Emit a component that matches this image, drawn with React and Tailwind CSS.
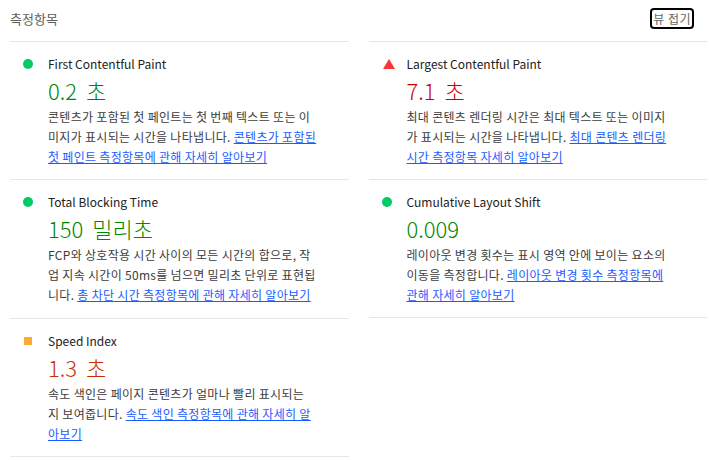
import React from 'react';

const metrics = [
  {
    title: 'First Contentful Paint',
    value: '0.2 초',
    status: 'pass',
    lines: ['콘텐츠가 포함된 첫 페인트는 첫 번째 텍스트 또는 이', '미지가 표시되는 시간을 나타냅니다. '],
    link: ['콘텐츠가 포함된', '첫 페인트 측정항목에 관해 자세히 알아보기'],
  },
  {
    title: 'Largest Contentful Paint',
    value: '7.1 초',
    status: 'fail',
    lines: ['최대 콘텐츠 렌더링 시간은 최대 텍스트 또는 이미지', '가 표시되는 시간을 나타냅니다. '],
    link: ['최대 콘텐츠 렌더링', '시간 측정항목 자세히 알아보기'],
  },
  {
    title: 'Total Blocking Time',
    value: '150 밀리초',
    status: 'pass',
    lines: ['FCP와 상호작용 시간 사이의 모든 시간의 합으로, 작', '업 지속 시간이 50ms를 넘으면 밀리초 단위로 표현됩', '니다. '],
    link: ['총 차단 시간 측정항목에 관해 자세히 알아보기'],
  },
  {
    title: 'Cumulative Layout Shift',
    value: '0.009',
    status: 'pass',
    lines: ['레이아웃 변경 횟수는 표시 영역 안에 보이는 요소의', '이동을 측정합니다. '],
    link: ['레이아웃 변경 횟수 측정항목에', '관해 자세히 알아보기'],
  },
  {
    title: 'Speed Index',
    value: '1.3 초',
    status: 'average',
    lines: ['속도 색인은 페이지 콘텐츠가 얼마나 빨리 표시되는', '지 보여줍니다. '],
    link: ['속도 색인 측정항목에 관해 자세히 알', '아보기'],
  },
];

const valueColor = {
  pass: 'text-[#008800]',
  fail: 'text-[#cc0000]',
  average: 'text-[#c33300]',
};

function StatusIcon({ status }) {
  if (status === 'fail') {
    return (
      <svg width="12" height="10" viewBox="0 0 12 10" className="ml-[2px]">
        <polygon points="6,0 12,10 0,10" fill="#ff3333" />
      </svg>
    );
  }
  if (status === 'average') {
    return <div className="ml-[2px] h-[8px] w-[8px] bg-[#ffaa33]" />;
  }
  return <div className="ml-[1px] h-[10px] w-[10px] rounded-full bg-[#00cc66]" />;
}

function Metric({ metric, last }) {
  const prefix = metric.lines.slice(0, -1);
  const lead = metric.lines[metric.lines.length - 1];
  return (
    <div className={`border-t border-[#e6e6e6] ${last ? 'border-b' : ''}`}>
      <div className="grid grid-cols-[26px_1fr] items-center px-[12px] pt-[12px] pb-[12px]">
        <StatusIcon status={metric.status} />
        <div className="text-[12px] leading-[20px] text-[#212121]">{metric.title}</div>
        <div className={`col-start-2 my-[6px] text-[22px] font-light leading-[21px] whitespace-nowrap [word-spacing:4px] ${valueColor[metric.status]}`}>
          {metric.value}
        </div>
        <p className="col-start-2 text-[12px] leading-[20px] tracking-[0.3px] text-[#3c3c3c] whitespace-nowrap">
          {prefix.map((l, i) => (
            <React.Fragment key={i}>
              {l}
              <br />
            </React.Fragment>
          ))}
          {lead}
          <a href="#" className="text-[#1a5cff] underline">
            {metric.link.map((l, i) => (
              <React.Fragment key={i}>
                {i > 0 && <br />}
                {l}
              </React.Fragment>
            ))}
          </a>
        </p>
      </div>
    </div>
  );
}

export default function App() {
  return (
    <div className="w-[709px] h-[460px] bg-white overflow-hidden font-['Noto_Sans_CJK_KR',sans-serif]">
      {/* Header */}
      <div className="flex h-[41px] items-center justify-between pb-[4px] pl-[10px] pr-[15px]">
        <span className="text-[13px] text-[#5f5f5f]">측정항목</span>
        <button className="rounded-[4px] border-2 border-black px-[1px] text-[12px] leading-[17px] tracking-[0.5px] text-[#666]">
          뷰 접기
        </button>
      </div>

      {/* Metrics */}
      <div className="grid grid-cols-2 gap-x-[20px] pl-[10px] pr-[2px]">
        {metrics.map((m, i) => (
          <Metric key={m.title} metric={m} last={i >= metrics.length - 2} />
        ))}
      </div>
    </div>
  );
}
